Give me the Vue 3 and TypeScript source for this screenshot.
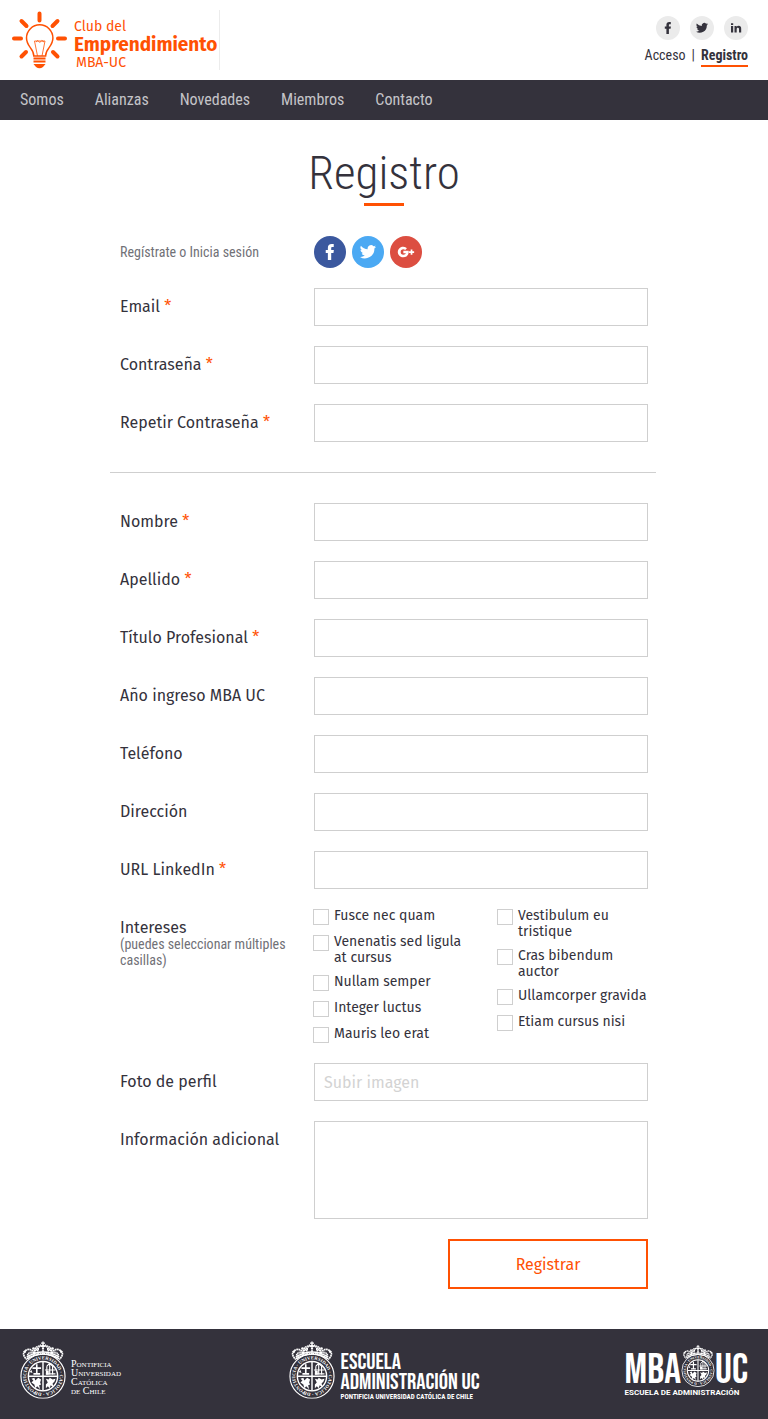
<script setup lang="ts">
import { ref } from 'vue'

interface Field {
  id: string
  label: string
  type: string
  required: boolean
}

const navigation: string[] = ['Somos', 'Alianzas', 'Novedades', 'Miembros', 'Contacto']

const accountFields: Field[] = [
  { id: 'email', label: 'Email', type: 'email', required: true },
  { id: 'password', label: 'Contraseña', type: 'password', required: true },
  { id: 'password-repeat', label: 'Repetir Contraseña', type: 'password', required: true },
]

const profileFields: Field[] = [
  { id: 'name', label: 'Nombre', type: 'text', required: true },
  { id: 'surname', label: 'Apellido', type: 'text', required: true },
  { id: 'degree', label: 'Título Profesional', type: 'text', required: true },
  { id: 'year', label: 'Año ingreso MBA UC', type: 'text', required: false },
  { id: 'phone', label: 'Teléfono', type: 'tel', required: false },
  { id: 'address', label: 'Dirección', type: 'text', required: false },
  { id: 'linkedin', label: 'URL LinkedIn', type: 'url', required: true },
]

const interests: string[][] = [
  ['Fusce nec quam', 'Venenatis sed ligula at cursus', 'Nullam semper', 'Integer luctus', 'Mauris leo erat'],
  ['Vestibulum eu tristique', 'Cras bibendum auctor', 'Ullamcorper gravida', 'Etiam cursus nisi'],
]

const motto = 'PONTIFICIA · UNIVERSIDAD · CATOLICA · DE · CHILE'

const values = ref<Record<string, string>>({})
const selected = ref<string[]>([])
const notes = ref('')
const photo = ref('')
</script>

<template>
  <svg class="sprite" aria-hidden="true">
    <symbol id="facebook" viewBox="0 0 24 24">
      <path d="M10.400 18v-5.200H8.800v-2.300h1.600V9c0-2 1-3 2.900-3h1.500v2.300h-1c-.7 0-.9.3-.9.9v1.300h2l-.3 2.300h-1.700V18z" />
    </symbol>
    <symbol id="twitter" viewBox="0 0 24 24">
      <path d="M18 8.100c-.4.200-.9.300-1.400.4.500-.3.900-.8 1.100-1.400-.5.300-1 .5-1.600.6A2.500 2.500 0 0 0 11.800 10 7.100 7.100 0 0 1 6.700 7.400a2.500 2.500 0 0 0 .8 3.300c-.4 0-.8-.1-1.100-.3 0 1.200.8 2.200 2 2.500-.4.100-.8.100-1.100 0 .3 1 1.200 1.700 2.300 1.700A5 5 0 0 1 6 15.700 7.100 7.100 0 0 0 16.800 9.400c.5-.3.9-.8 1.200-1.300z" />
    </symbol>
    <symbol id="linkedin" viewBox="0 0 24 24">
      <path d="M7 10h2.200v6.500H7zM7 7.200h2.200v1.900H7zM10.500 10h2.100v.9c.4-.7 1.100-1.100 2.100-1.100 2 0 2.500 1.300 2.500 3.100v3.600h-2.200v-3.200c0-.8-.1-1.600-1.100-1.600s-1.200.7-1.200 1.600v3.200h-2.200z" />
    </symbol>
    <symbol id="google" viewBox="0 0 24 24">
      <path d="M10 11.100v1.800h1.900c-.2.700-.8 1.100-1.900 1.100a2 2 0 1 1 0-4c.5 0 1 .2 1.400.5l1.300-1.300a4 4 0 1 0-2.700 6.800c2.400 0 4-1.700 4-4v-.9zM15.500 10.200h1.300v1.300h1.300v1.300h-1.300v1.300h-1.300v-1.300h-1.300v-1.300h1.300z" />
    </symbol>
    <symbol id="crest" viewBox="0 0 48 60">
      <g fill="none" stroke="#fff">
        <circle cx="24" cy="36.500" r="23" stroke-width="1.200" />
        <circle cx="24" cy="36.500" r="15.300" stroke-width="1.500" />
        <path d="M24 21v31M9 36.500h30" stroke-width="1.500" />
        <path d="M17.500 24v11M13 28h9M14 34h7" stroke-width="1.700" />
        <path d="M28 26v8M31 23v12M34 26v9M26 30h11M27 34h10M28 26l3-3 4 4" stroke-width="1.200" />
        <path d="M6 19Q24 8 42 19M7 16.500Q24 6 41 16.500" stroke-width="1.400" />
        <path d="M8 18Q24 8 40 18" stroke-width="1.800" stroke-dasharray="1 1" />
        <path d="M6 18Q1 12 7 9q6-2 8 5-1-10 8-9M42 18q5-6-1-9-6-2-8 5 1-10-8-9M19 13q-2-6 3-9M29 13q2-6-3-9" stroke-width="1.800" stroke-dasharray="1.800 .5" />
        <path d="M8 15q1-4 5-3M40 15q-1-4-5-3M15 12q1-4 5-4M33 12q-1-4-5-4M24 5v8" stroke-width="2.200" stroke-dasharray="1.300 .5" />
        <path d="M24 0v5M22 2h4" stroke-width="1.300" />
      </g>
      <g fill="#fff">
        <circle cx="24" cy="5" r="1.600" /><circle cx="14" cy="7.500" r="1.300" /><circle cx="34" cy="7.500" r="1.300" /><circle cx="5" cy="11" r="1.300" /><circle cx="43" cy="11" r="1.300" />
        <path d="m12 39 3-1 1 3 3-3 3 2-1 3 1 2-2 1 1 4-3-3-2 2-1-4-3-2 2-2zM27 39l3 1 1-2 3 2 3-1-1 3-2 2 1 4-3-2-1 3-2-2-2 2v-4l2-2zM10 32l2-2 1 3zM27 31h3v4h-3z" />
      </g>
    </symbol>
    <path id="crest-ring" d="M17.500 52.700A17.500 17.500 0 1 1 30.500 52.700A17.500 17.500 0 0 1 17.500 52.700" fill="none" />
  </svg>

  <header class="header">
    <a href="#" class="brand">
      <svg class="bulb" viewBox="0 0 58 60" aria-hidden="true">
        <g fill="none" stroke="#ff5103">
          <path d="M28.500 3.500v7M10.500 11l5 5M46.500 11l-5 5M3 28.500h7M54 28.500h-7M10.500 46.500l4.500-4.500M46.500 46.500L42 42" stroke-width="4" stroke-linecap="round" />
          <path d="M22.800 46c0-8-7.300-9-7.300-18a13.200 13.200 0 0 1 26.400 0c0 9-7.300 10-7.300 18z" stroke-width="1.500" />
          <path d="M26.500 46l-3-15h10.500L31 46M25 32l1.800-1.500 2 2 2-2L33 32" stroke-width=".8" />
          <path d="M22.500 48.500h12M22.500 51.500h12" stroke-width="2" />
        </g>
        <path d="M22.500 54h12l-2.500 3q-3.500 2.500-7 0z" fill="#ff5103" />
      </svg>
      <span class="brand-text"><span>Club del</span><strong>Emprendimiento</strong><span class="mba">MBA-UC</span></span>
    </a>
    <div class="account">
      <div class="tiny-social">
        <a href="#" aria-label="Facebook"><svg><use href="#facebook" /></svg></a>
        <a href="#" aria-label="Twitter"><svg><use href="#twitter" /></svg></a>
        <a href="#" aria-label="LinkedIn"><svg><use href="#linkedin" /></svg></a>
      </div>
      <div class="session"><a href="#">Acceso</a><span>|</span><a href="#" class="current">Registro</a></div>
    </div>
  </header>

  <nav class="nav">
    <a v-for="item in navigation" :key="item" href="#">{{ item }}</a>
  </nav>

  <main class="main">
    <h1>Registro</h1>
    <form class="form" @submit.prevent>
      <div class="row social-row">
        <span class="hint">Regístrate o Inicia sesión</span>
        <div class="social">
          <button type="button" class="fb" aria-label="Facebook"><svg><use href="#facebook" /></svg></button>
          <button type="button" class="tw" aria-label="Twitter"><svg><use href="#twitter" /></svg></button>
          <button type="button" class="gp" aria-label="Google+"><svg><use href="#google" /></svg></button>
        </div>
      </div>
      <div v-for="field in accountFields" :key="field.id" class="row">
        <label :for="field.id">{{ field.label }} <span v-if="field.required" class="star">*</span></label>
        <input :id="field.id" v-model="values[field.id]" class="box" :type="field.type">
      </div>
      <hr>
      <div v-for="field in profileFields" :key="field.id" class="row">
        <label :for="field.id">{{ field.label }} <span v-if="field.required" class="star">*</span></label>
        <input :id="field.id" v-model="values[field.id]" class="box" :type="field.type">
      </div>
      <div class="row interests" role="group" aria-labelledby="interests-label">
        <div class="interests-title">
          <span id="interests-label">Intereses</span>
          <span class="hint">(puedes seleccionar múltiples casillas)</span>
        </div>
        <div class="columns">
          <div v-for="(column, index) in interests" :key="index" class="column">
            <label v-for="interest in column" :key="interest" class="check">
              <input v-model="selected" type="checkbox" :value="interest"><span>{{ interest }}</span>
            </label>
          </div>
        </div>
      </div>
      <div class="row">
        <label for="photo">Foto de perfil</label>
        <input id="photo" v-model="photo" class="box" type="text" placeholder="Subir imagen">
      </div>
      <div class="row">
        <label for="notes">Información adicional</label>
        <textarea id="notes" v-model="notes" class="box"></textarea>
      </div>
      <button type="submit" class="submit">Registrar</button>
    </form>
  </main>

  <footer class="footer">
    <a href="#" class="logo university">
      <svg class="crest" viewBox="0 0 48 60"><use href="#crest" /><text class="ring"><textPath href="#crest-ring">{{ motto }}</textPath></text></svg>
      <span class="serif"><span>Pontificia</span><span>Universidad</span><span>Católica</span><span>de Chile</span></span>
    </a>
    <a href="#" class="logo school">
      <svg class="crest" viewBox="0 0 48 60"><use href="#crest" /><text class="ring"><textPath href="#crest-ring">{{ motto }}</textPath></text></svg>
      <span class="school-text"><span>ESCUELA</span><span>ADMINISTRACIÓN UC</span><small>PONTIFICIA UNIVERSIDAD CATÓLICA DE CHILE</small></span>
    </a>
    <a href="#" class="logo mba-logo">
      <span class="mba-line"><span>MBA</span><svg class="crest small" viewBox="0 0 48 60"><use href="#crest" /><text class="ring"><textPath href="#crest-ring">{{ motto }}</textPath></text></svg><span>UC</span></span>
      <small>ESCUELA DE ADMINISTRACIÓN</small>
    </a>
  </footer>
</template>

<style>
body {
  margin: 0;
  background: #fff;
}
</style>

<style scoped>
.header, .nav, .main, .footer {
  --narrow: "Roboto Condensed", "Liberation Sans Narrow", Roboto, sans-serif;
  --humanist: "Fira Sans", "Noto Sans", sans-serif;
  --poster: "Bebas Neue", "Oswald", "Roboto Condensed", "Liberation Sans Narrow", sans-serif;
  box-sizing: border-box;
  color: #34323c;
  font-family: var(--humanist);
}
a {
  color: inherit;
  text-decoration: none;
}
.sprite {
  position: absolute;
  width: 0;
  height: 0;
}
.ring {
  fill: #fff;
  font: 700 5px "Liberation Serif", serif;
}
.header {
  display: flex;
  justify-content: space-between;
  align-items: flex-start;
  height: 80px;
  padding: 10px 20px 0 11px;
}
.brand {
  display: flex;
  gap: 5px;
  height: 60px;
  padding-right: 2px;
  border-right: 1px solid #ececec;
  color: #ff5103;
}
.bulb {
  width: 58px;
  height: 60px;
}
.brand-text {
  display: flex;
  flex-direction: column;
  padding-top: 8px;
  font-size: 14px;
  line-height: 18px;
}
.brand-text strong {
  font-size: 19px;
}
.brand-text .mba {
  padding-left: 2px;
}
.account {
  display: flex;
  flex-direction: column;
  align-items: flex-end;
  padding-top: 6px;
}
.tiny-social {
  display: flex;
  gap: 10px;
}
.tiny-social a {
  width: 24px;
  height: 24px;
  border-radius: 50%;
  background: #ebebeb;
}
.tiny-social svg {
  display: block;
  width: 24px;
  height: 24px;
  fill: #34323c;
}
.session {
  display: flex;
  gap: 6px;
  padding-top: 6px;
  font: 14px/19px var(--narrow);
}
.session .current {
  border-bottom: 2px solid #ff5103;
  font-weight: 700;
}
.nav {
  display: flex;
  align-items: center;
  gap: 31px;
  height: 40px;
  padding: 0 20px;
  background: #34323c;
  color: #c4c4c8;
  font: 16px/20px var(--narrow);
}
.main {
  max-width: 568px;
  margin: 0 auto;
  padding: 24px 10px 40px;
}
h1 {
  position: relative;
  margin: 0 0 30px;
  padding-bottom: 4px;
  font: 300 47px/58px var(--narrow);
  text-align: center;
}
h1::after {
  position: absolute;
  bottom: 0;
  left: 50%;
  width: 40px;
  height: 3px;
  margin-left: -20px;
  background: #ff5103;
  content: "";
}
.form {
  display: flex;
  flex-direction: column;
  gap: 20px;
}
.row {
  display: grid;
  grid-template-columns: 194px 1fr;
  padding: 0 10px;
  font-size: 16px;
  line-height: 38px;
}
.hint {
  color: #717177;
  font: 14px/16px var(--narrow);
}
.social-row {
  align-items: center;
}
.social {
  display: flex;
  gap: 6px;
}
.social button {
  width: 32px;
  height: 32px;
  padding: 0;
  border: 0;
  border-radius: 50%;
}
.social svg {
  display: block;
  width: 32px;
  height: 32px;
  fill: #fff;
}
.fb {
  background: #3b589e;
}
.tw {
  background: #4ba9f3;
}
.gp {
  background: #dc4e41;
}
.star {
  color: #ff5103;
}
.box {
  box-sizing: border-box;
  width: 100%;
  height: 38px;
  margin: 0;
  padding: 0 9px;
  border: 1px solid #cfcfcf;
  border-radius: 0;
  background: #fff;
  color: #34323c;
  font: 16px/20px var(--humanist);
}
.box::placeholder {
  color: #d3d3d3;
}
textarea.box {
  height: 98px;
  resize: none;
}
hr {
  align-self: stretch;
  height: 1px;
  margin: 10px 2px 10px 0;
  border: 0;
  background: #cfcfcf;
}
.interests {
  margin-top: -1px;
}
.interests-title {
  display: flex;
  flex-direction: column;
  padding: 12px 24px 0 0;
  line-height: 16px;
}
.columns {
  display: grid;
  grid-template-columns: 150px 1fr;
  column-gap: 34px;
  margin-left: -1px;
}
.column {
  display: flex;
  flex-direction: column;
  gap: 8px;
}
.check {
  display: flex;
  align-items: flex-start;
  gap: 5px;
  min-height: 18px;
  font-size: 14px;
  line-height: 16px;
}
.check:last-child {
  min-height: 17px;
}
.check input {
  flex: none;
  box-sizing: border-box;
  width: 16px;
  height: 16px;
  margin: 1px 0 0;
  border: 1px solid #cfcfcf;
  background: #fff;
  appearance: none;
}
.check input:checked {
  background: #ff5103;
}
.submit {
  align-self: flex-end;
  width: 200px;
  height: 50px;
  margin-right: 10px;
  padding: 2px 0 0;
  border: 2px solid #ff5103;
  background: #fff;
  color: #ff5103;
  font: 16px/20px var(--humanist);
}
.footer {
  display: grid;
  grid-template-columns: 1fr auto 1fr;
  align-items: start;
  height: 90px;
  padding: 10px 20px 0;
  background: #34323c;
  color: #fff;
}
.logo {
  display: flex;
}
.crest {
  flex: none;
  width: 46px;
  height: 62px;
  overflow: visible;
}
.serif {
  display: flex;
  flex-direction: column;
  padding: 20px 0 0 5px;
  font: 10px/9px "Liberation Serif", serif;
  font-variant: small-caps;
}
.school-text {
  display: flex;
  flex-direction: column;
  padding: 13px 0 0 6px;
  font: 23px/20px var(--poster);
}
small {
  font: 700 7px/10px var(--narrow);
}
.mba-logo {
  flex-direction: column;
  justify-self: end;
  padding-top: 6px;
}
.mba-logo small {
  padding-top: 1px;
  font: 700 8px/10px Roboto, sans-serif;
}
.mba-line {
  display: flex;
  align-items: flex-end;
  height: 42px;
  font: 42px/32px var(--poster);
}
.small {
  width: 34px;
  height: 42px;
}
</style>
